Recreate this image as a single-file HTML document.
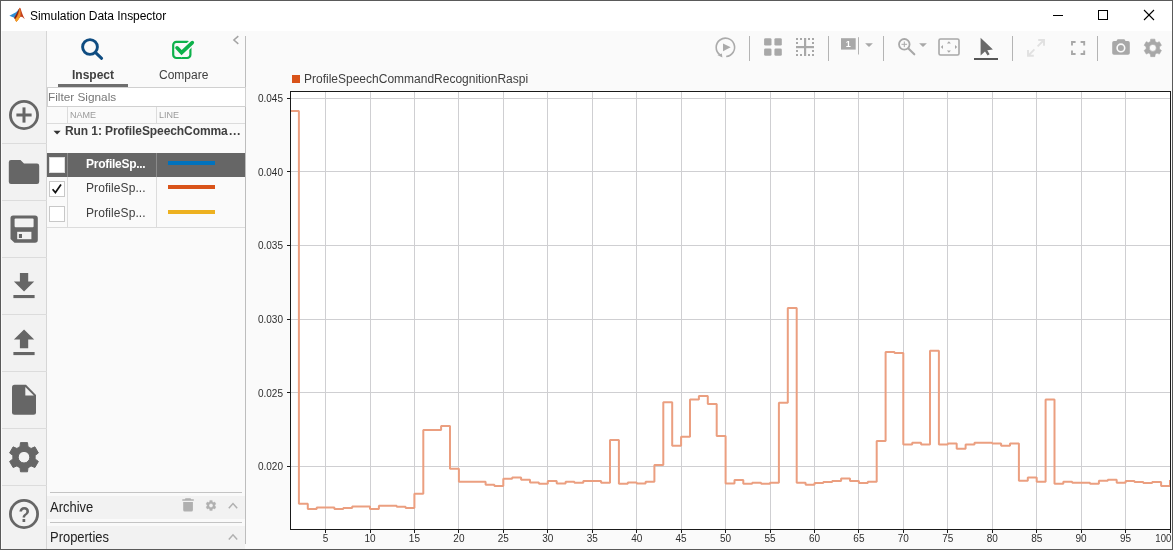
<!DOCTYPE html>
<html><head><meta charset="utf-8"><title>Simulation Data Inspector</title>
<style>
html,body{margin:0;padding:0;}
body{width:1173px;height:550px;overflow:hidden;background:#fafafa;font-family:"Liberation Sans",Arial,sans-serif;position:relative;}
.abs{position:absolute;}
#win{position:absolute;left:0;top:0;width:1171px;height:548px;border:1px solid #5a5a5a;pointer-events:none;z-index:50;}
#title{left:1px;top:1px;width:1171px;height:30px;background:#fff;}
#title .t{position:absolute;left:29px;top:8px;font-size:12px;color:#000;white-space:nowrap;letter-spacing:-0.05px;}
#side{left:2px;top:31px;width:44px;height:518px;background:#f2f2f2;border-right:1px solid #d6d6d6;}
.sep{position:absolute;left:0;width:45px;height:1px;background:#dcdcdc;}
#panel{left:47px;top:31px;width:198px;height:518px;background:#fafafa;}
.tab{position:absolute;top:37px;font-size:12px;color:#404040;white-space:nowrap;}
#filter{left:0;top:56px;width:197px;height:18px;border:1px solid #d0d0d0;background:#fff;font-size:11.8px;color:#777;line-height:19px;padding-left:0px;}
.hdr{position:absolute;top:76px;height:16px;font-size:9px;color:#9a9a9a;line-height:17px;}
.row{position:absolute;left:0;width:198px;font-size:12px;color:#404040;}
.cb{position:absolute;left:2px;width:14px;height:14px;border:1px solid #c8c8c8;background:#fff;}
.nm{position:absolute;left:39px;white-space:nowrap;letter-spacing:0.08px;}
.ln{position:absolute;left:121px;width:47px;height:4px;}
.band{position:absolute;left:0;width:198px;background:#f2f2f2;font-size:14px;color:#222;}
</style></head>
<body>
<div id="root" style="position:absolute;left:0;top:0;width:1173px;height:550px;will-change:transform;">
<div id="title" class="abs">
<svg class="abs" style="left:-1px;top:-1px" width="30" height="30" viewBox="0 0 30 30">
<path d="M9.4,15.7 L14.6,13 C16.5,11.8 18.2,10.2 19.2,8.4 L18.4,13.5 L14.2,17.7 Z" fill="#2f8fd6"/>
<path d="M19.5,7.9 C18.5,9.6 16.6,14.2 14.2,17.7 L16.2,21.8 C17.5,21.1 18.8,18.7 20.2,17.1 C21.2,16.1 22.6,16.8 24.8,19.1 C23,16 21.4,11 20.7,8.7 C20.4,7.9 19.9,7.6 19.5,7.9 Z" fill="#c4411d"/>
<path d="M19.2,8.4 C18.2,11 16.2,14.6 14.2,17.7 L15.1,19.4 C17,16.2 18.5,12.2 19.2,8.4Z" fill="#7a2418"/>
<path d="M19.7,8.1 C19.3,12 17.6,17 15.1,19.4 L16.2,21.8 C17.5,21.1 18.8,18.7 20.2,17.1 C20.9,14 20.6,10.5 19.7,8.1 Z" fill="#f0902a"/>
<path d="M16.2,21.8 C17.3,21.2 18.3,19.6 19.3,18.2 L17.4,17.2 L15.1,19.4 Z" fill="#f4a326"/>
</svg>
<div class="t">Simulation Data Inspector</div>
<svg class="abs" style="left:1040px;top:0" width="131" height="30" viewBox="1041 1 131 30" shape-rendering="crispEdges">
<line x1="1053" y1="15.5" x2="1063" y2="15.5" stroke="#000"/>
<rect x="1098.5" y="10.5" width="9" height="9" fill="none" stroke="#000"/>
<g shape-rendering="auto"><line x1="1144" y1="10" x2="1154" y2="20" stroke="#000" stroke-width="1.1"/><line x1="1154" y1="10" x2="1144" y2="20" stroke="#000" stroke-width="1.1"/></g>
</svg>
</div>

<div id="side" class="abs">
<div class="sep" style="top:112px"></div><div class="sep" style="top:169px"></div><div class="sep" style="top:226px"></div><div class="sep" style="top:283px"></div><div class="sep" style="top:340px"></div><div class="sep" style="top:397px"></div><div class="sep" style="top:454px"></div>
<svg class="abs" style="left:-2px;top:-31px" width="47" height="550" viewBox="0 0 47 550">
<g fill="#666" stroke="none">
<!-- plus -->
<circle cx="24" cy="115" r="13.6" fill="none" stroke="#666" stroke-width="2.8"/>
<rect x="16.4" y="113.5" width="15.2" height="3"/><rect x="22.5" y="107.4" width="3" height="15.2"/>
<!-- folder -->
<path d="M11,160 H20.5 L24,163.5 H37 A2.2,2.2 0 0 1 39.2,165.7 V181.8 A2.2,2.2 0 0 1 37,184 H11 A2.2,2.2 0 0 1 8.8,181.8 V162.2 A2.2,2.2 0 0 1 11,160 Z"/>
<!-- save -->
<path d="M13.5,215.5 H35 A2.8,2.8 0 0 1 37.8,218.3 V240 A2.8,2.8 0 0 1 35,242.8 H14.5 L10.5,239 V218.3 A2.8,2.8 0 0 1 13.5,215.5 Z"/>
<rect x="14.6" y="218.6" width="19" height="8.6" rx="1" fill="#f2f2f2"/>
<rect x="17.2" y="231.8" width="14.2" height="7.4" fill="#f2f2f2"/>
<rect x="18.9" y="234" width="3.1" height="4"/>
<!-- download -->
<path d="M19.9,273 H28.2 V281.5 H34.2 L24.05,291.6 L13.9,281.5 H19.9 Z"/>
<rect x="13.4" y="295" width="21.2" height="3.1"/>
<!-- upload -->
<path d="M24.05,329.6 L34.2,339.6 H28.2 V348.3 H19.9 V339.6 H13.9 Z"/>
<rect x="13.4" y="352" width="21.2" height="3.1"/>
<!-- file -->
<path d="M14.5,384.8 H26 L36,395 V412.2 A2.5,2.5 0 0 1 33.5,414.7 H14.5 A2.5,2.5 0 0 1 12,412.2 V387.3 A2.5,2.5 0 0 1 14.5,384.8 Z"/>
<path d="M25.3,387 L33.8,395.6 H25.3 Z" fill="#f2f2f2"/>
<!-- gear -->
<g transform="translate(24,457.2)" stroke="#666" stroke-width="1" stroke-linejoin="round"><path id="gear" fill-rule="evenodd" d="M-4.01,-10.46 L-3.50,-14.59 L3.50,-14.59 L4.01,-10.46 A11.2,11.2 0 0 1 7.05,-8.70 L10.88,-10.33 L14.38,-4.26 L11.06,-1.75 A11.2,11.2 0 0 1 11.06,1.75 L14.38,4.26 L10.88,10.33 L7.05,8.70 A11.2,11.2 0 0 1 4.01,10.46 L3.50,14.59 L-3.50,14.59 L-4.01,10.46 A11.2,11.2 0 0 1 -7.05,8.70 L-10.88,10.33 L-14.38,4.26 L-11.06,1.75 A11.2,11.2 0 0 1 -11.06,-1.75 L-14.38,-4.26 L-10.88,-10.33 L-7.05,-8.70 A11.2,11.2 0 0 1 -4.01,-10.46 Z M0,-5.8 A5.8,5.8 0 1 0 0,5.8 A5.8,5.8 0 1 0 0,-5.8 Z"/></g>
<!-- help -->
<circle cx="24" cy="514" r="13.6" fill="none" stroke="#666" stroke-width="2.8"/>
<text transform="translate(24.2,522) scale(0.86,1.04)" x="0" y="0" text-anchor="middle" font-family="Liberation Sans, Arial, sans-serif" font-weight="bold" font-size="22" fill="#666">?</text>
</g>
</svg>
</div>

<div id="panel" class="abs">
<div class="abs" style="left:198px;top:5px;width:1px;height:508px;background:#bdbdbd"></div>
<!-- tabs -->
<svg class="abs" style="left:0;top:0" width="198" height="60" viewBox="47 31 198 60">
<circle cx="90" cy="47" r="7.4" fill="none" stroke="#0f4c81" stroke-width="2.9"/>
<line x1="95.6" y1="52.6" x2="101.6" y2="58.3" stroke="#0f4c81" stroke-width="3" stroke-linecap="round"/>
<rect x="173.2" y="41.8" width="17.2" height="16.2" rx="3.2" fill="none" stroke="#0db14b" stroke-width="2.2"/>
<path d="M176.5,47.5 L181.5,52.8 L192.8,41.8" fill="none" stroke="#fafafa" stroke-width="6.5" stroke-linecap="butt"/>
<path d="M177,47.8 L181.6,52.6 L192.3,42.6" fill="none" stroke="#0db14b" stroke-width="3.6" stroke-linecap="round" stroke-linejoin="miter"/>
<path d="M238.3,36.1 L233.9,40 L238.3,43.9" fill="none" stroke="#a4a4a4" stroke-width="1.5"/>
</svg>
<div class="tab" style="left:25px;font-weight:bold;">Inspect</div>
<div class="tab" style="left:112px;">Compare</div>
<div class="abs" style="left:11px;top:53px;width:70px;height:3px;background:#6e6e6e"></div>
<div id="filter" class="abs">Filter Signals</div>
<!-- header -->
<div class="abs" style="left:0;top:92px;width:198px;height:1px;background:#dcdcdc"></div>
<div class="abs" style="left:20px;top:76px;width:1px;height:16px;background:#dcdcdc"></div>
<div class="abs" style="left:109px;top:76px;width:1px;height:16px;background:#dcdcdc"></div>
<div class="hdr" style="left:23px">NAME</div>
<div class="hdr" style="left:112px">LINE</div>
<!-- run row -->
<svg class="abs" style="left:6px;top:99px" width="9" height="6"><path d="M0.5,0.8 H7.7 L4.1,4.6 Z" fill="#333"/></svg>
<div class="abs" style="left:18px;top:93px;font-size:12px;font-weight:bold;color:#404040;white-space:nowrap;line-height:14px;letter-spacing:-0.08px;">Run 1: ProfileSpeechComma<span style="letter-spacing:0.75px;margin-left:1.2px">...</span></div>
<!-- rows -->
<div class="row" style="top:122px;height:24px;background:#666;color:#fff;font-weight:bold;">
 <div class="cb" style="top:4px;border-color:#ddd"></div><div class="nm" style="top:4px;letter-spacing:-0.27px">ProfileSp...</div><div class="ln" style="top:8px;background:#0072bd"></div>
 <div class="abs" style="left:20px;top:0;width:1px;height:24px;background:#8a8a8a"></div><div class="abs" style="left:109px;top:0;width:1px;height:24px;background:#8a8a8a"></div>
</div>
<div class="row" style="top:146px;height:25px;">
 <div class="cb" style="top:4px"></div>
 <svg class="abs" style="left:4px;top:6px" width="12" height="12" viewBox="0 0 12 12"><path d="M1.6,6.2 L4.4,9.6 L10,1.6" fill="none" stroke="#111" stroke-width="1.7"/></svg>
 <div class="nm" style="top:4px">ProfileSp...</div><div class="ln" style="top:8px;background:#d95319"></div>
</div>
<div class="row" style="top:171px;height:25px;">
 <div class="cb" style="top:4px"></div><div class="nm" style="top:4px">ProfileSp...</div><div class="ln" style="top:8px;background:#edb120"></div>
</div>
<div class="abs" style="left:20px;top:146px;width:1px;height:50px;background:#dcdcdc"></div>
<div class="abs" style="left:109px;top:146px;width:1px;height:50px;background:#dcdcdc"></div>
<div class="abs" style="left:0;top:196px;width:198px;height:1px;background:#dcdcdc"></div>
<!-- archive / properties -->
<div class="abs" style="left:3px;top:461px;width:192px;height:1px;background:#c4c4c4"></div>
<div class="band" style="top:465px;height:23px;"><span style="position:absolute;left:3px;top:3px;transform:scaleX(0.925);transform-origin:left top;">Archive</span></div>
<div class="abs" style="left:3px;top:491px;width:192px;height:1px;background:#c4c4c4"></div>
<div class="band" style="top:495px;height:23px;"><span style="position:absolute;left:3px;top:3px;transform:scaleX(0.925);transform-origin:left top;">Properties</span></div>
<svg class="abs" style="left:0;top:460px" width="198" height="58" viewBox="47 491 198 58">
<g fill="#b0b0b0">
<path d="M185.5,498.3 H190.5 L191.2,499.3 H193.8 V500.8 H182.3 V499.3 H184.8 Z"/>
<path d="M183.2,502 H192.9 V510 A1.5,1.5 0 0 1 191.4,511.5 H184.7 A1.5,1.5 0 0 1 183.2,510 Z"/>
<g transform="translate(211,505.5) scale(0.345)" stroke="#b0b0b0" stroke-width="1" stroke-linejoin="round"><use href="#gear"/></g>
</g>
<path d="M228.8,508.2 L233,503.6 L237.2,508.2" fill="none" stroke="#b0b0b0" stroke-width="1.5"/>
<path d="M228.8,539.4 L233,534.8 L237.2,539.4" fill="none" stroke="#b0b0b0" stroke-width="1.5"/>
</svg>
</div>

<!-- toolbar -->
<svg class="abs" style="left:700px;top:31px" width="472" height="35" viewBox="700 31 472 35">
<g fill="#a8a8a8" stroke="none">
<!-- play -->
<path d="M726.2,56.56 A9.2,9.2 0 1 0 719.74,54.65" fill="none" stroke="#ababab" stroke-width="1.6"/>
<path d="M717.3,55.1 L721.9,53.5 L722.4,57.4 Z" fill="#ababab"/>
<path d="M723,43.4 L730.7,47.3 L723,51.2 Z" fill="#ababab"/>
<!-- separators -->
<g fill="#b4b4b4"><rect x="749" y="36" width="1" height="25"/><rect x="828" y="36" width="1" height="25"/><rect x="883" y="36" width="1" height="25"/><rect x="1012" y="36" width="1" height="25"/><rect x="1097" y="36" width="1" height="25"/></g>
<!-- grid -->
<rect x="764.1" y="38.2" width="7.4" height="7.4" rx="1.4"/><rect x="774.4" y="38.2" width="7.4" height="7.4" rx="1.4"/><rect x="764.1" y="48.4" width="7.4" height="7.4" rx="1.4"/><rect x="774.4" y="48.4" width="7.4" height="7.4" rx="1.4"/>
<!-- dashed grid -->
<rect x="804" y="38" width="2.2" height="18"/><rect x="796" y="46" width="18" height="2.2"/>
<g id="dots">
<rect x="796" y="38" width="2" height="2"/><rect x="800" y="38" width="2" height="2"/><rect x="808" y="38" width="2" height="2"/><rect x="812" y="38" width="2" height="2"/>
<rect x="796" y="54" width="2" height="2"/><rect x="800" y="54" width="2" height="2"/><rect x="808" y="54" width="2" height="2"/><rect x="812" y="54" width="2" height="2"/>
<rect x="796" y="42" width="2" height="2"/><rect x="796" y="50" width="2" height="2"/><rect x="812" y="42" width="2" height="2"/><rect x="812" y="50" width="2" height="2"/>
</g>
<!-- 1 box -->
<rect x="841" y="38.2" width="14.7" height="11.4"/>
<text x="848.3" y="47" text-anchor="middle" font-family="Liberation Sans, Arial, sans-serif" font-weight="bold" font-size="9" fill="#fff">1</text>
<rect x="858" y="37.2" width="1" height="17.3" fill="#b4b4b4"/>
<path d="M865.1,43.3 H872.9 L869,46.9 Z"/>
<!-- zoom -->
<circle cx="904.3" cy="44.3" r="5.3" fill="none" stroke="#a8a8a8" stroke-width="1.8"/>
<path d="M901.5,44.3 H907.1 M904.3,41.5 V47.1" stroke="#a8a8a8" stroke-width="1" fill="none"/>
<line x1="908.4" y1="48.5" x2="914.3" y2="54.3" stroke="#a8a8a8" stroke-width="2.1" stroke-linecap="round"/>
<path d="M919.1,43.3 H926.9 L923,46.9 Z"/>
<!-- fit -->
<rect x="939" y="39" width="20" height="16" rx="1.5" fill="none" stroke="#a8a8a8" stroke-width="1.6"/>
<path d="M946.9,43.5 H950.9 L948.9,41.3 Z M946.9,50.5 H950.9 L948.9,52.7 Z M943,45 V49 L940.8,47 Z M955,45 V49 L957.2,47 Z"/>
<!-- pointer -->
<path d="M980.6,37.7 V55.6 L985,51.6 L987.6,55.4 L989.6,54.2 L987.3,50.3 L992.9,49.6 Z" fill="#6a6a6a"/>
<rect x="974" y="58" width="24" height="2" fill="#555"/>
<!-- expand -->
<g stroke="#e1e1e1" stroke-width="1.9" fill="none"><path d="M1038.2,40 H1044 V45.8 M1044,40 L1037.6,46.4 M1028,50 V55.8 H1033.8 M1028,55.8 L1034.4,49.4"/></g>
<!-- fullscreen -->
<g stroke="#a8a8a8" stroke-width="1.9" fill="none"><path d="M1072,45.6 V42 H1075.6 M1080.6,42 H1084.2 V45.6 M1084.2,50.4 V54 H1080.6 M1075.6,54 H1072 V50.4"/></g>
<!-- camera -->
<path d="M1117.6,39.2 H1124.4 L1125.6,41 H1128 A1.8,1.8 0 0 1 1129.8,42.8 V53 A1.8,1.8 0 0 1 1128,54.8 H1114 A1.8,1.8 0 0 1 1112.2,53 V42.8 A1.8,1.8 0 0 1 1114,41 H1116.4 Z"/>
<circle cx="1120.9" cy="47.9" r="3.8" fill="none" stroke="#fafafa" stroke-width="1.6"/>
<!-- gear -->
<g transform="translate(1152.8,47.9) scale(0.6)" stroke="#a8a8a8" stroke-width="1" stroke-linejoin="round"><use href="#gear"/></g>
</g>
</svg>

<svg id="chart" width="1173" height="550" viewBox="0 0 1173 550" style="position:absolute;left:0;top:0">
<rect x="290" y="91" width="881" height="439" fill="#fff"/>
<g stroke="#cfcfd2" stroke-width="1" shape-rendering="crispEdges"><line x1="325.5" y1="92" x2="325.5" y2="529"/><line x1="370.5" y1="92" x2="370.5" y2="529"/><line x1="414.5" y1="92" x2="414.5" y2="529"/><line x1="458.5" y1="92" x2="458.5" y2="529"/><line x1="503.5" y1="92" x2="503.5" y2="529"/><line x1="547.5" y1="92" x2="547.5" y2="529"/><line x1="592.5" y1="92" x2="592.5" y2="529"/><line x1="636.5" y1="92" x2="636.5" y2="529"/><line x1="681.5" y1="92" x2="681.5" y2="529"/><line x1="725.5" y1="92" x2="725.5" y2="529"/><line x1="770.5" y1="92" x2="770.5" y2="529"/><line x1="814.5" y1="92" x2="814.5" y2="529"/><line x1="858.5" y1="92" x2="858.5" y2="529"/><line x1="903.5" y1="92" x2="903.5" y2="529"/><line x1="947.5" y1="92" x2="947.5" y2="529"/><line x1="992.5" y1="92" x2="992.5" y2="529"/><line x1="1036.5" y1="92" x2="1036.5" y2="529"/><line x1="1081.5" y1="92" x2="1081.5" y2="529"/><line x1="1125.5" y1="92" x2="1125.5" y2="529"/><line x1="291" y1="98.5" x2="1170" y2="98.5"/><line x1="291" y1="171.5" x2="1170" y2="171.5"/><line x1="291" y1="245.5" x2="1170" y2="245.5"/><line x1="291" y1="319.5" x2="1170" y2="319.5"/><line x1="291" y1="392.5" x2="1170" y2="392.5"/><line x1="291" y1="466.5" x2="1170" y2="466.5"/></g>
<path d="M290.0,111.0 L298.9,111.0 L298.9,503.8 L307.8,503.8 L307.8,509.0 L316.7,509.0 L316.7,507.6 L334.4,507.6 L334.4,509.0 L343.3,509.0 L343.3,508.0 L352.2,508.0 L352.2,506.6 L370.0,506.6 L370.0,509.0 L378.9,509.0 L378.9,505.8 L396.7,505.8 L396.7,506.8 L405.6,506.8 L405.6,508.0 L414.4,508.0 L414.4,493.8 L423.3,493.8 L423.3,430.0 L441.1,430.0 L441.1,426.0 L450.0,426.0 L450.0,468.8 L458.9,468.8 L458.9,481.8 L485.6,481.8 L485.6,484.8 L494.4,484.8 L494.4,486.0 L503.3,486.0 L503.3,478.8 L512.2,478.8 L512.2,477.6 L521.1,477.6 L521.1,479.8 L530.0,479.8 L530.0,482.6 L538.9,482.6 L538.9,483.8 L547.8,483.8 L547.8,481.0 L556.7,481.0 L556.7,483.6 L565.6,483.6 L565.6,481.8 L574.4,481.8 L574.4,482.8 L583.3,482.8 L583.3,481.0 L601.1,481.0 L601.1,482.8 L610.0,482.8 L610.0,440.0 L618.9,440.0 L618.9,483.8 L627.8,483.8 L627.8,482.6 L636.7,482.6 L636.7,483.6 L645.6,483.6 L645.6,481.8 L654.4,481.8 L654.4,465.0 L663.3,465.0 L663.3,402.2 L672.2,402.2 L672.2,445.8 L681.1,445.8 L681.1,436.8 L690.0,436.8 L690.0,399.6 L698.9,399.6 L698.9,396.0 L707.8,396.0 L707.8,404.0 L716.7,404.0 L716.7,436.0 L725.6,436.0 L725.6,483.6 L734.5,483.6 L734.5,480.0 L743.3,480.0 L743.3,483.8 L752.2,483.8 L752.2,482.8 L761.1,482.8 L761.1,483.8 L770.0,483.8 L770.0,482.8 L778.9,482.8 L778.9,402.8 L787.8,402.8 L787.8,308.0 L796.7,308.0 L796.7,482.8 L805.6,482.8 L805.6,484.8 L814.5,484.8 L814.5,483.0 L823.3,483.0 L823.3,482.0 L832.2,482.0 L832.2,481.0 L841.1,481.0 L841.1,478.6 L850.0,478.6 L850.0,481.0 L858.9,481.0 L858.9,483.0 L867.8,483.0 L867.8,481.8 L876.7,481.8 L876.7,441.0 L885.6,441.0 L885.6,352.0 L894.5,352.0 L894.5,353.0 L903.3,353.0 L903.3,444.6 L912.2,444.6 L912.2,442.8 L921.1,442.8 L921.1,444.6 L930.0,444.6 L930.0,350.8 L938.9,350.8 L938.9,444.6 L947.8,444.6 L947.8,443.6 L956.7,443.6 L956.7,448.8 L965.6,448.8 L965.6,444.6 L974.5,444.6 L974.5,442.8 L992.2,442.8 L992.2,443.6 L1001.1,443.6 L1001.1,445.8 L1010.0,445.8 L1010.0,443.6 L1018.9,443.6 L1018.9,480.8 L1027.8,480.8 L1027.8,477.6 L1036.7,477.6 L1036.7,481.8 L1045.6,481.8 L1045.6,399.6 L1054.5,399.6 L1054.5,483.8 L1063.3,483.8 L1063.3,481.8 L1072.2,481.8 L1072.2,482.8 L1090.0,482.8 L1090.0,483.8 L1098.9,483.8 L1098.9,480.8 L1107.8,480.8 L1107.8,479.8 L1116.7,479.8 L1116.7,482.8 L1125.6,482.8 L1125.6,481.0 L1134.5,481.0 L1134.5,482.0 L1143.3,482.0 L1143.3,483.0 L1152.2,483.0 L1152.2,482.0 L1161.1,482.0 L1161.1,486.0 L1170.0,486.0 L1170.0,480.0" fill="none" stroke="#eb9f80" stroke-width="2" stroke-linejoin="bevel"/>
<g stroke="#1a1a1a" stroke-width="1" shape-rendering="crispEdges">
<line x1="290.5" y1="91" x2="290.5" y2="530"/><line x1="290" y1="91.5" x2="1171" y2="91.5"/><line x1="290" y1="529.5" x2="1171" y2="529.5"/><line x1="1170.5" y1="91" x2="1170.5" y2="530"/>
<line x1="287" y1="98.5" x2="290" y2="98.5"/><line x1="287" y1="171.5" x2="290" y2="171.5"/><line x1="287" y1="245.5" x2="290" y2="245.5"/><line x1="287" y1="319.5" x2="290" y2="319.5"/><line x1="287" y1="392.5" x2="290" y2="392.5"/><line x1="287" y1="466.5" x2="290" y2="466.5"/><line x1="325.5" y1="530" x2="325.5" y2="533"/><line x1="370.5" y1="530" x2="370.5" y2="533"/><line x1="414.5" y1="530" x2="414.5" y2="533"/><line x1="458.5" y1="530" x2="458.5" y2="533"/><line x1="503.5" y1="530" x2="503.5" y2="533"/><line x1="547.5" y1="530" x2="547.5" y2="533"/><line x1="592.5" y1="530" x2="592.5" y2="533"/><line x1="636.5" y1="530" x2="636.5" y2="533"/><line x1="681.5" y1="530" x2="681.5" y2="533"/><line x1="725.5" y1="530" x2="725.5" y2="533"/><line x1="770.5" y1="530" x2="770.5" y2="533"/><line x1="814.5" y1="530" x2="814.5" y2="533"/><line x1="858.5" y1="530" x2="858.5" y2="533"/><line x1="903.5" y1="530" x2="903.5" y2="533"/><line x1="947.5" y1="530" x2="947.5" y2="533"/><line x1="992.5" y1="530" x2="992.5" y2="533"/><line x1="1036.5" y1="530" x2="1036.5" y2="533"/><line x1="1081.5" y1="530" x2="1081.5" y2="533"/><line x1="1125.5" y1="530" x2="1125.5" y2="533"/><line x1="1170.5" y1="530" x2="1170.5" y2="533"/></g>
<g font-family="Liberation Sans, Arial, sans-serif" font-size="10" fill="#2e2e2e"><text x="283" y="102" text-anchor="end">0.045</text><text x="283" y="175.5" text-anchor="end">0.040</text><text x="283" y="249" text-anchor="end">0.035</text><text x="283" y="323" text-anchor="end">0.030</text><text x="283" y="396.5" text-anchor="end">0.025</text><text x="283" y="470" text-anchor="end">0.020</text><text x="325.6" y="541.5" text-anchor="middle">5</text><text x="370.0" y="541.5" text-anchor="middle">10</text><text x="414.4" y="541.5" text-anchor="middle">15</text><text x="458.9" y="541.5" text-anchor="middle">20</text><text x="503.3" y="541.5" text-anchor="middle">25</text><text x="547.8" y="541.5" text-anchor="middle">30</text><text x="592.2" y="541.5" text-anchor="middle">35</text><text x="636.7" y="541.5" text-anchor="middle">40</text><text x="681.1" y="541.5" text-anchor="middle">45</text><text x="725.6" y="541.5" text-anchor="middle">50</text><text x="770.0" y="541.5" text-anchor="middle">55</text><text x="814.5" y="541.5" text-anchor="middle">60</text><text x="858.9" y="541.5" text-anchor="middle">65</text><text x="903.3" y="541.5" text-anchor="middle">70</text><text x="947.8" y="541.5" text-anchor="middle">75</text><text x="992.2" y="541.5" text-anchor="middle">80</text><text x="1036.7" y="541.5" text-anchor="middle">85</text><text x="1081.1" y="541.5" text-anchor="middle">90</text><text x="1125.6" y="541.5" text-anchor="middle">95</text><text x="1171.3" y="541.5" text-anchor="end" textLength="16" lengthAdjust="spacingAndGlyphs">100</text></g>
<rect x="292" y="75" width="8" height="8" fill="#d95319"/>
<text x="304" y="83" font-family="Liberation Sans, Arial, sans-serif" font-size="12" fill="#404040">ProfileSpeechCommandRecognitionRaspi</text>
</svg>
<div id="win"></div>
</div>
</body></html>
